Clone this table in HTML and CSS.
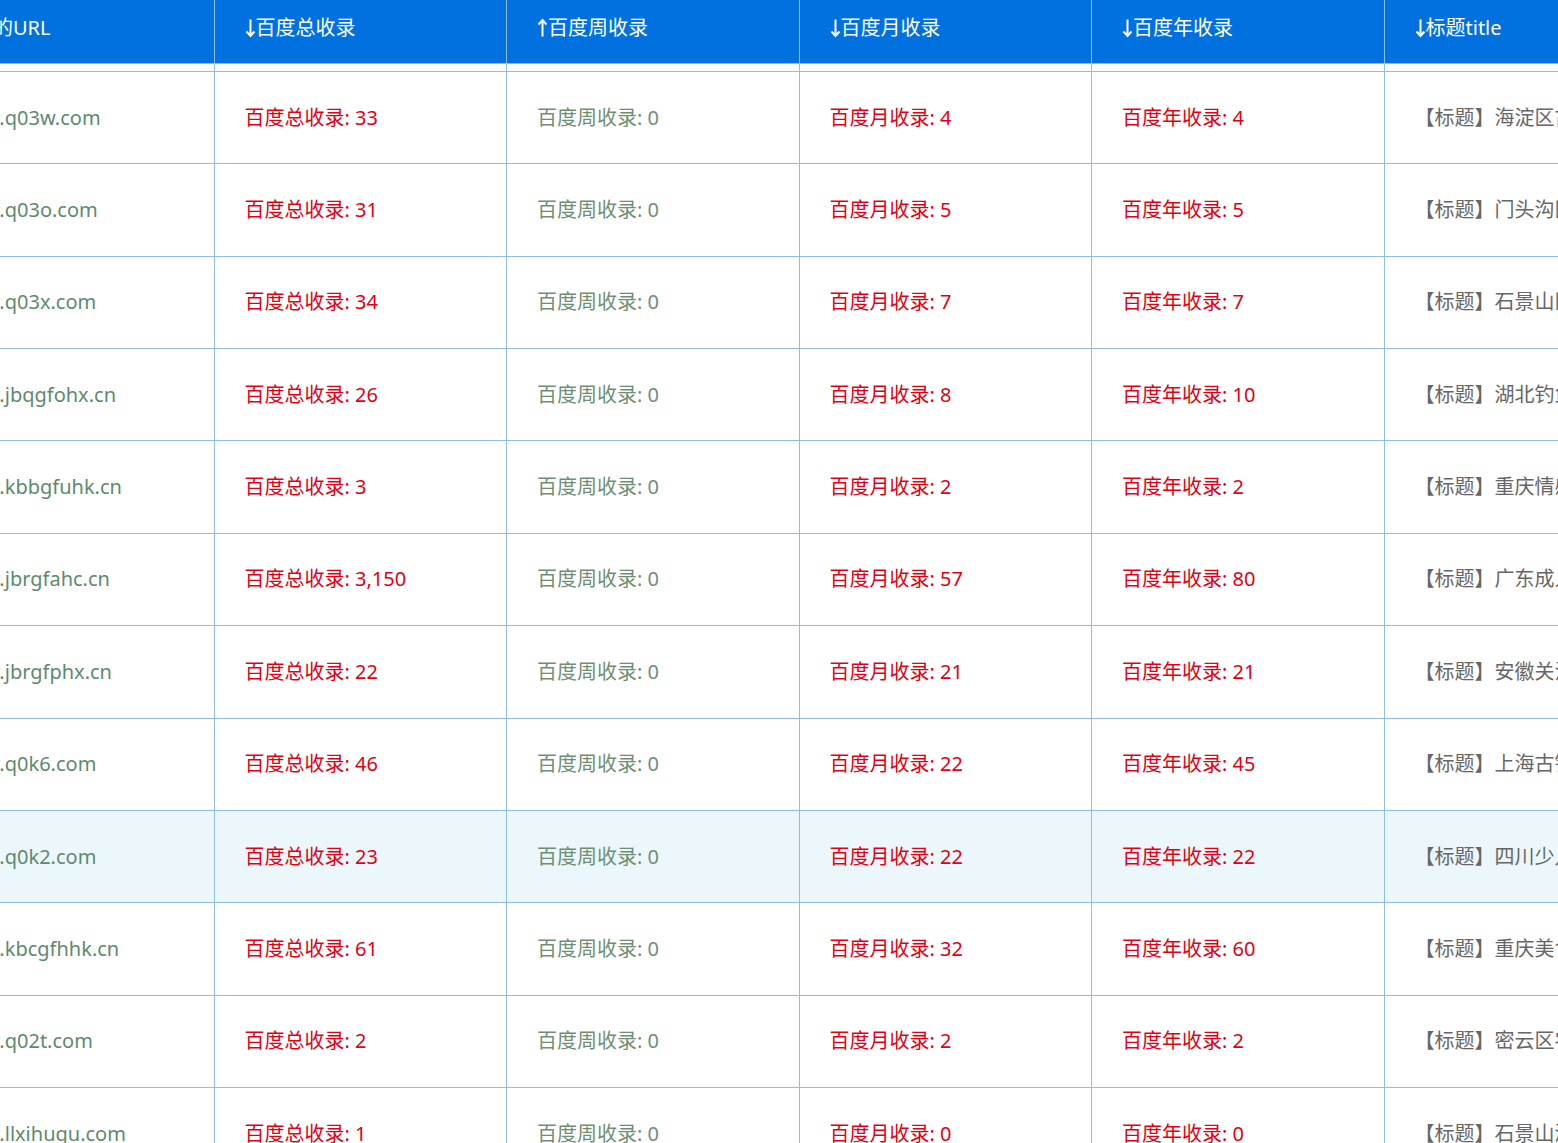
FILE: index.html
```html
<!DOCTYPE html>
<html lang="zh-CN">
<head>
<meta charset="utf-8">
<title>收录查询</title>
<link rel="stylesheet" href="styles.css">
</head>
<body>
<div class="scroller" id="scroller">
<table class="grid">
<colgroup>
<col class="c-url"><col class="c-num"><col class="c-num"><col class="c-num"><col class="c-num"><col class="c-title">
</colgroup>
<thead>
<tr class="head">
<th>网站的URL</th>
<th><svg class="arrow" viewBox="0 0 11 20"><path d="M5.5 1.5V18M1.5 13.5L5.5 18L9.5 13.5"/></svg>百度总收录</th>
<th><svg class="arrow" viewBox="0 0 11 20"><path d="M5.5 18.5V2M1.5 6.5L5.5 2L9.5 6.5"/></svg>百度周收录</th>
<th><svg class="arrow" viewBox="0 0 11 20"><path d="M5.5 1.5V18M1.5 13.5L5.5 18L9.5 13.5"/></svg>百度月收录</th>
<th><svg class="arrow" viewBox="0 0 11 20"><path d="M5.5 1.5V18M1.5 13.5L5.5 18L9.5 13.5"/></svg>百度年收录</th>
<th><svg class="arrow" viewBox="0 0 11 20"><path d="M5.5 1.5V18M1.5 13.5L5.5 18L9.5 13.5"/></svg>标题title</th>
</tr>
<tr class="spacer"><td></td><td></td><td></td><td></td><td></td><td></td></tr>
</thead>
<tbody>
<tr><td class="url">www.q03w.com</td><td class="red">百度总收录: 33</td><td class="week">百度周收录: 0</td><td class="red">百度月收录: 4</td><td class="red">百度年收录: 4</td><td class="title">【标题】海淀区古玩收藏交流中心</td></tr>
<tr><td class="url">www.q03o.com</td><td class="red">百度总收录: 31</td><td class="week">百度周收录: 0</td><td class="red">百度月收录: 5</td><td class="red">百度年收录: 5</td><td class="title">【标题】门头沟区旅游信息网</td></tr>
<tr><td class="url">www.q03x.com</td><td class="red">百度总收录: 34</td><td class="week">百度周收录: 0</td><td class="red">百度月收录: 7</td><td class="red">百度年收录: 7</td><td class="title">【标题】石景山区家政服务</td></tr>
<tr><td class="url">www.jbqgfohx.cn</td><td class="red">百度总收录: 26</td><td class="week">百度周收录: 0</td><td class="red">百度月收录: 8</td><td class="red">百度年收录: 10</td><td class="title">【标题】湖北钓鱼俱乐部</td></tr>
<tr><td class="url">www.kbbgfuhk.cn</td><td class="red">百度总收录: 3</td><td class="week">百度周收录: 0</td><td class="red">百度月收录: 2</td><td class="red">百度年收录: 2</td><td class="title">【标题】重庆情感咨询</td></tr>
<tr><td class="url">www.jbrgfahc.cn</td><td class="red">百度总收录: 3,150</td><td class="week">百度周收录: 0</td><td class="red">百度月收录: 57</td><td class="red">百度年收录: 80</td><td class="title">【标题】广东成人教育网</td></tr>
<tr><td class="url">www.jbrgfphx.cn</td><td class="red">百度总收录: 22</td><td class="week">百度周收录: 0</td><td class="red">百度月收录: 21</td><td class="red">百度年收录: 21</td><td class="title">【标题】安徽关注民生</td></tr>
<tr><td class="url">www.q0k6.com</td><td class="red">百度总收录: 46</td><td class="week">百度周收录: 0</td><td class="red">百度月收录: 22</td><td class="red">百度年收录: 45</td><td class="title">【标题】上海古镇旅游</td></tr>
<tr class="hover"><td class="url">www.q0k2.com</td><td class="red">百度总收录: 23</td><td class="week">百度周收录: 0</td><td class="red">百度月收录: 22</td><td class="red">百度年收录: 22</td><td class="title">【标题】四川少儿美术</td></tr>
<tr><td class="url">www.kbcgfhhk.cn</td><td class="red">百度总收录: 61</td><td class="week">百度周收录: 0</td><td class="red">百度月收录: 32</td><td class="red">百度年收录: 60</td><td class="title">【标题】重庆美食推荐</td></tr>
<tr><td class="url">www.q02t.com</td><td class="red">百度总收录: 2</td><td class="week">百度周收录: 0</td><td class="red">百度月收录: 2</td><td class="red">百度年收录: 2</td><td class="title">【标题】密云区农家乐</td></tr>
<tr><td class="url">www.llxihuqu.com</td><td class="red">百度总收录: 1</td><td class="week">百度周收录: 0</td><td class="red">百度月收录: 0</td><td class="red">百度年收录: 0</td><td class="title">【标题】石景山游乐园</td></tr>
</tbody>
</table>
</div>
<script src="script.js"></script>
</body>
</html>
```

FILE: styles.css
```css
html, body {
  margin: 0;
  padding: 0;
  background: #ffffff;
}
body {
  font-family: "Noto Sans", "Noto Sans CJK SC", sans-serif;
  font-size: 20px;
}
.scroller {
  width: 100%;
  overflow: hidden;
}
.grid {
  table-layout: fixed;
  border-collapse: separate;
  border-spacing: 0;
  width: 1961.5px;
}
.c-url { width: 291.5px; }
.c-num { width: 292.5px; }
.c-title { width: 500px; }
.grid th,
.grid td {
  border-right: 1px solid #8fbde6;
  border-bottom: 1px solid #8fbde6;
  padding: 0 0 0 30px;
  text-align: left;
  white-space: nowrap;
  overflow: hidden;
}
.head th {
  background: #0071df;
  color: #ffffff;
  font-weight: normal;
  height: 55px;
  padding-bottom: 8px;
  vertical-align: middle;
  line-height: 26px;
}
.arrow {
  width: 11px;
  height: 20px;
  vertical-align: -3px;
  fill: none;
  stroke: #ffffff;
  stroke-width: 2;
}
.spacer td {
  height: 7px;
  padding: 0;
}
tbody td {
  height: 91.36px;
  vertical-align: middle;
  line-height: 26px;
}
tbody tr.hover td {
  background: #ecf7fc;
}
.url { color: #5e8a6c; }
.red { color: #e40012; }
.week { color: #6f8f74; }
.title { color: #666666; }
```

FILE: script.js
```js
document.getElementById('scroller').scrollLeft = 77;
```
